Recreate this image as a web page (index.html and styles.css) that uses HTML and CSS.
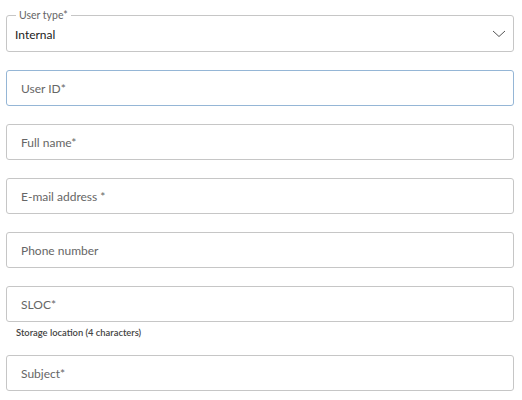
FILE: index.html
```html
<!DOCTYPE html>
<html>
<head>
<meta charset="utf-8">
<link rel="stylesheet" href="styles.css">
</head>
<body>
<form class="form">
  <div class="select">
    <span class="legend">User type*</span>
    <span class="value">Internal</span>
    <svg class="chev" width="14" height="8" viewBox="0 0 14 8"><path d="M1 1 L7 6.5 L13 1" fill="none" stroke="#555" stroke-width="1"/></svg>
  </div>
  <div class="field focus">User ID*</div>
  <div class="field">Full name*</div>
  <div class="field">E-mail address&nbsp;*</div>
  <div class="field">Phone number</div>
  <div class="group">
    <div class="field">SLOC*</div>
    <div class="helper">Storage location (4 characters)</div>
  </div>
  <div class="field">Subject*</div>
</form>
</body>
</html>
```
FILE: styles.css
```css
html, body {
  margin: 0;
  background: #fff;
}
body {
  font-family: Lato, "Open Sans", Arial, sans-serif;
  padding: 15px 8px 0 6px;
}
.form {
  display: flex;
  flex-direction: column;
  gap: 18px;
}
.select {
  position: relative;
  height: 33px;
  border: 1px solid #c6c6c6;
  border-radius: 3px;
  display: flex;
  align-items: center;
  justify-content: space-between;
  padding: 2px 8px 0 8px;
}
.legend {
  position: absolute;
  top: -7px;
  left: 9px;
  background: #fff;
  padding: 0 3px;
  font-size: 10.5px;
  line-height: 12px;
  color: #666;
}
.value {
  font-size: 12px;
  color: #222;
}
.chev {
  margin-right: -1px;
  margin-top: -2px;
}
.field {
  height: 34px;
  border: 1px solid #c6c6c6;
  border-radius: 3px;
  display: flex;
  align-items: center;
  padding-left: 14px;
  font-size: 12px;
  color: #666;
}
.field.focus {
  border-color: #95b6d6;
}
.group {
  display: flex;
  flex-direction: column;
}
.helper {
  font-size: 9.4px;
  line-height: 12px;
  margin: 5px 0 -2px 10px;
  color: #444;
  font-weight: 600;
}
```
